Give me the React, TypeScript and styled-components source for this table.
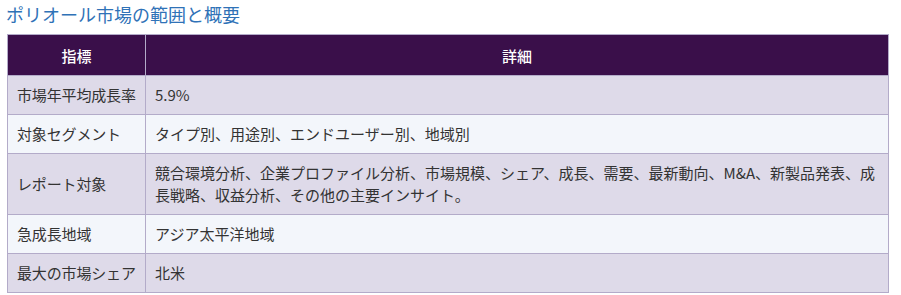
import styled, { createGlobalStyle } from 'styled-components'

const GlobalStyle = createGlobalStyle`
    body {
        margin: 0;
        background: #ffffff;
        font-family: "Noto Sans CJK JP", "Noto Sans", sans-serif;
    }
`

const Page = styled.div`
    padding: 2px 12px 0 7px;
`

const Title = styled.h2`
    margin: 0 0 8px -1px;
    font-size: 18px;
    font-weight: 400;
    line-height: 24px;
    color: #2f72b7;
`

const Table = styled.table`
    width: 100%;
    table-layout: fixed;
    border-collapse: collapse;
    font-size: 15px;
    color: #333333;
`

const HeadCell = styled.th<{ $narrow?: boolean }>`
    width: ${p => (p.$narrow ? '119px' : 'auto')};
    height: 40px;
    padding: 0 9px;
    background: #3a0f4a;
    color: #ffffff;
    font-weight: 500;
    text-align: center;
    border: 1px solid #b3abc9;
`

const Row = styled.tr<{ $even: boolean }>`
    background: ${p => (p.$even ? '#f3f6fb' : '#dedae9')};
`

const Cell = styled.td<{ $label?: boolean }>`
    padding: 8px 9px;
    line-height: 22px;
    border: 1px solid #b3abc9;
    vertical-align: middle;
    white-space: ${p => (p.$label ? 'nowrap' : 'normal')};
    letter-spacing: ${p => (p.$label ? '-0.15px' : '0')};
`

const rows: [string, string][] = [
    ['市場年平均成長率', '5.9%'],
    ['対象セグメント', 'タイプ別、用途別、エンドユーザー別、地域別'],
    ['レポート対象', '競合環境分析、企業プロファイル分析、市場規模、シェア、成長、需要、最新動向、M&A、新製品発表、成長戦略、収益分析、その他の主要インサイト。'],
    ['急成長地域', 'アジア太平洋地域'],
    ['最大の市場シェア', '北米'],
]

const App = () => {
    return (
        <>
            <GlobalStyle />
            <Page>
                <Title>ポリオール市場の範囲と概要</Title>
                <Table>
                    <thead>
                        <tr>
                            <HeadCell $narrow>指標</HeadCell>
                            <HeadCell>詳細</HeadCell>
                        </tr>
                    </thead>
                    <tbody>
                        {rows.map(([k, v], i) => (
                            <Row key={k} $even={i % 2 === 1}>
                                <Cell $label>{k}</Cell>
                                <Cell>{v}</Cell>
                            </Row>
                        ))}
                    </tbody>
                </Table>
            </Page>
        </>
    )
}

export default App
